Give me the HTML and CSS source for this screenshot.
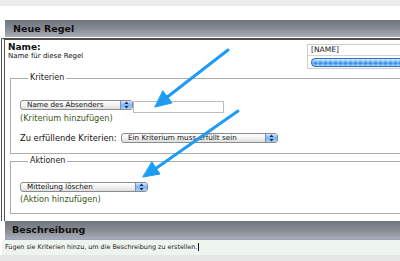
FILE: index.html
```html
<!DOCTYPE html>
<html lang="de">
  <head>
    <meta charset="UTF-8" />
    <title>Neue Regel</title>
    <link rel="stylesheet" href="styles.css">
  </head>
  <body>
    <div class="page">
      <div class="topband"></div>
      <div class="bar first">Neue Regel</div>
      <div class="box">
        <div class="name-row">
          <div class="name-label">
            <b>Name:</b>
            <small>Name für diese Regel</small>
          </div>
          <div class="name-field">
            <div class="name-input">[NAME]</div>
            <div class="progress"></div>
          </div>
        </div>
        <fieldset class="group">
          <legend>Kriterien</legend>
          <div class="row first-row">
            <div class="select sel-sender">
              <span>Name des Absenders</span>
              <span class="stepper"><svg width="5" height="8" viewBox="0 0 5 8"><path d="M2.5 0.5L4.5 3H0.5Z M2.5 7.5L4.5 5H0.5Z" fill="#1a2a50"/></svg></span>
            </div>
            <div class="text-input"></div>
          </div>
          <div class="add">(Kriterium hinzufügen)</div>
          <div class="row match-row">
            <span class="label">Zu erfüllende Kriterien:</span>
            <div class="select sel-match">
              <span>Ein Kriterium muss erfüllt sein</span>
              <span class="stepper"><svg width="5" height="8" viewBox="0 0 5 8"><path d="M2.5 0.5L4.5 3H0.5Z M2.5 7.5L4.5 5H0.5Z" fill="#1a2a50"/></svg></span>
            </div>
          </div>
        </fieldset>
        <fieldset class="group actions">
          <legend>Aktionen</legend>
          <div class="row action-row">
            <div class="select sel-action">
              <span>Mitteilung löschen</span>
              <span class="stepper"><svg width="5" height="8" viewBox="0 0 5 8"><path d="M2.5 0.5L4.5 3H0.5Z M2.5 7.5L4.5 5H0.5Z" fill="#1a2a50"/></svg></span>
            </div>
          </div>
          <div class="add">(Aktion hinzufügen)</div>
        </fieldset>
      </div>
      <div class="bar second">Beschreibung</div>
      <div class="desc">Fügen sie Kriterien hinzu, um die Beschreibung zu erstellen.<span class="caret"></span></div>
      <div class="bottomband"></div>

      <!-- annotation arrows drawn over the form -->
      <svg class="arrows" width="400" height="261" viewBox="0 0 400 261">
        <g stroke="#1e9cf2" stroke-width="3" stroke-linecap="round" fill="#1e9cf2">
          <line x1="228" y1="50" x2="166" y2="98" />
          <path d="M155 107 L172 103 L163 91 Z" stroke-width="1" stroke-linejoin="round" />
          <line x1="238" y1="111" x2="155" y2="169" />
          <path d="M143 177 L160 174 L152 162 Z" stroke-width="1" stroke-linejoin="round" />
        </g>
      </svg>
    </div>
  </body>
</html>
```

FILE: styles.css
```css
body {
  margin: 0;
  background: #fff;
  font-family: "DejaVu Sans", Verdana, sans-serif;
  color: #111;
}
.page {
  position: relative;
  width: 400px;
  height: 261px;
  overflow: hidden;
}
.topband {
  height: 6px;
  background: #ececec;
}
.bar {
  margin-left: 5px;
  padding-left: 8px;
  font-size: 9.5px;
  font-weight: bold;
  color: #111;
  background: linear-gradient(#70757d, #868b93 50%, #a9aeb6);
}
.bar.first {
  margin-top: 14px;
  height: 17px;
  line-height: 17px;
}
.bar.second {
  height: 18px;
  line-height: 18px;
  padding-left: 7px;
  border-bottom: 1px solid #9aa4c2;
}
.box {
  margin: 1px 0 0 1px;
  border-top: 2px solid #4d4d4d;
  border-left: 4px double #555;
  height: 181px;
  box-sizing: content-box;
}
.name-row {
  display: flex;
  height: 33px;
}
.name-label {
  padding: 3px 0 0 3px;
}
.name-label b {
  display: block;
  font-size: 9px;
  line-height: 9px;
}
.name-label small {
  display: block;
  font-size: 7px;
  line-height: 8px;
}
.name-field {
  margin: 4px 0 0 auto;
  width: 92px;
  height: 23px;
  border: 1px solid #cdcdcd;
  border-right: none;
}
.name-input {
  height: 10px;
  line-height: 10px;
  padding-left: 3px;
  font-size: 7.5px;
  color: #222;
  border-bottom: 1px solid #d4d4d4;
}
.progress {
  margin: 2px 0 0 3px;
  height: 9px;
  border-radius: 5px 0 0 5px;
  border: 1px solid #2f6fc0;
  border-right: none;
  background:
    repeating-linear-gradient(90deg, rgba(255,255,255,0.25) 0 2px, transparent 2px 5px),
    linear-gradient(#d6ecff, #5eaaf2 45%, #2f86e6 60%, #9fd0fb);
  box-sizing: border-box;
}
.group {
  margin: 0 0 0 5px;
  padding: 0 0 10px 9px;
  border: 1px solid #acacac;
  border-right: none;
  min-width: 0;
}
.group legend {
  margin-left: 8px;
  padding: 0 2px;
  font-size: 8px;
  line-height: 10px;
  color: #1a1a1a;
}
.group.actions {
  margin-top: 2px;
  padding-bottom: 8px;
}
.row {
  display: flex;
  align-items: flex-start;
}
.first-row {
  margin-top: 17px;
  height: 13px;
}
.match-row {
  margin-top: 9px;
  height: 11px;
  align-items: center;
}
.action-row {
  margin-top: 16px;
}
.label {
  width: 101px;
  font-size: 8.3px;
  white-space: nowrap;
}
.select {
  display: flex;
  height: 10px;
  border: 1px solid #8c8c8c;
  border-radius: 3px;
  background: linear-gradient(#ffffff, #f2f2f2 50%, #dedede);
  font-size: 7.2px;
  line-height: 10px;
  box-sizing: border-box;
  overflow: hidden;
}
.select span:first-child {
  flex: 1;
  padding-left: 6px;
  white-space: nowrap;
  line-height: 8px;
}
.stepper {
  width: 11px;
  display: flex;
  align-items: center;
  justify-content: center;
  border-left: 1px solid #6f8fc8;
  background: linear-gradient(#d4e8fd, #7ab4f2 50%, #a9d2fb);
}
.sel-sender {
  width: 113px;
}
.sel-match {
  width: 157px;
}
.sel-action {
  width: 128px;
}
.text-input {
  margin-top: 1px;
  width: 91px;
  height: 12px;
  border: 1px solid #bbb;
  box-sizing: border-box;
  background: #fff;
}
.add {
  font-size: 8.2px;
  line-height: 10px;
  color: #3a5520;
}
.actions .add {
  margin-top: 2px;
  line-height: 11px;
}
.desc {
  margin-left: 2px;
  height: 15px;
  line-height: 15px;
  padding-left: 3px;
  font-size: 6.4px;
  background: #eef4ee;
  color: #222;
}
.caret {
  display: inline-block;
  width: 1px;
  height: 8px;
  margin-left: 1px;
  background: #111;
  vertical-align: middle;
}
.bottomband {
  height: 6px;
  background: #e6e6e6;
}
.arrows {
  position: absolute;
  top: 0;
  left: 0;
  pointer-events: none;
}
```
